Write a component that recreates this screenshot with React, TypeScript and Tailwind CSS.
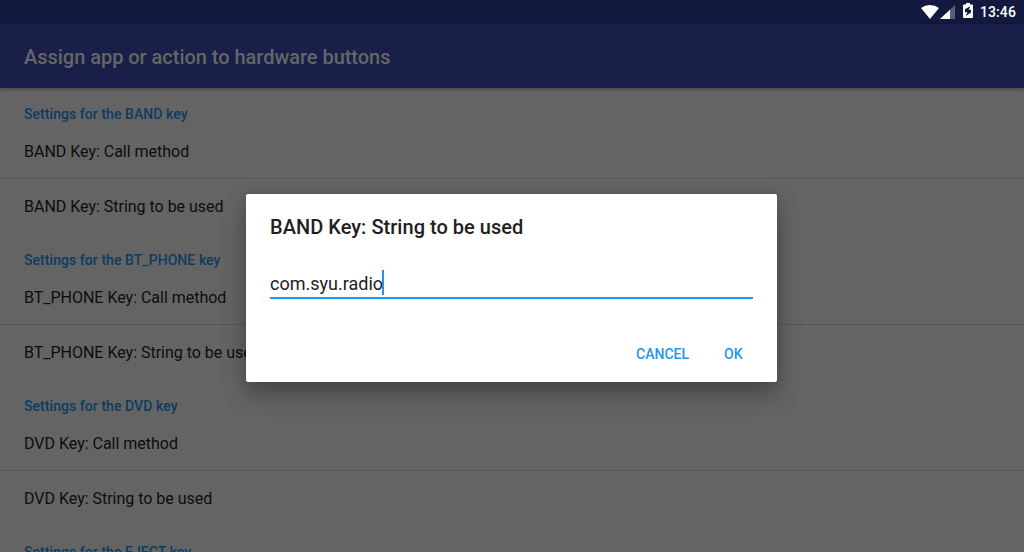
import React from "react";

const groups = ["BAND", "BT_PHONE", "DVD", "EJECT"];

function StatusBar() {
  return (
    <div className="flex h-6 shrink-0 items-center justify-end bg-[#141940] pr-2 text-white">
      <svg className="mr-px h-[14px] w-[18px]" viewBox="0 0 18 14" fill="currentColor">
        <path d="M9 14 0 2.9Q4 0 9 0t9 2.9Z" />
      </svg>
      <svg className="mr-2 h-[14px] w-[15px]" viewBox="0 0 15 14">
        <path d="M15 0v14H0Z" fill="#5b5e79" />
        <path d="M10 4.7V14H0Z" fill="#fff" />
      </svg>
      <svg className="mt-[-3px] mr-[7px] h-[15px] w-[10px]" viewBox="0 0 10 15">
        <path d="M3 0h4v1.5h2a1 1 0 0 1 1 1V14a1 1 0 0 1-1 1H1a1 1 0 0 1-1-1V2.5a1 1 0 0 1 1-1h2Z" fill="#fff" />
        <path d="M7.2 3.3 2 6.3v2.9h2.4L2.7 13 8 9.5V6.8H5.8Z" fill="#141940" />
      </svg>
      <span className="text-[14px] leading-6 font-medium tracking-[0.1px]">13:46</span>
    </div>
  );
}

function Group({ name }: { name: string }) {
  return (
    <section className="h-[146px] shrink-0 text-[16px] text-[#0d0d0d]">
      <h2 className="h-9 px-6 pt-4 text-[14px] leading-5 font-medium tracking-[0.06px] text-[#0d3c61]">Settings for the {name} key</h2>
      <div className="flex h-[55px] items-center border-b border-[#575757] px-6 pt-0.5 tracking-[-0.015px]">{name} Key: Call method</div>
      <div className="flex h-[55px] items-center px-6 tracking-[-0.015px]">{name} Key: String to be used</div>
    </section>
  );
}

export default function App() {
  return (
    <div className="relative flex h-[552px] w-[1024px] flex-col overflow-hidden bg-[#646464] font-[Roboto,sans-serif]">
      <StatusBar />
      <header className="z-0 flex h-16 shrink-0 items-center bg-[#191f48] px-6 pt-0.5 text-[20px] font-medium tracking-[-0.03px] text-[#666666] shadow-[0_1px_4px_rgba(0,0,0,0.35)]">
        Assign app or action to hardware buttons
      </header>
      <main className="flex flex-col">{groups.map((g) => <Group key={g} name={g} />)}</main>
      <div role="dialog" className="absolute top-[194px] left-[246px] flex h-[188px] w-[531px] flex-col rounded-[2px] bg-white px-6 shadow-[0_12px_24px_rgba(0,0,0,0.3),0_0_12px_rgba(0,0,0,0.1)]">
        <h1 className="mt-[18px] text-[20px] leading-[30px] font-medium tracking-[0.03px] text-[#212121]">BAND Key: String to be used</h1>
        <div className="mt-[28px] flex h-[29px] items-center border-b-2 border-[#2196f3] text-[18px] text-[#212121]">
          com.syu.radio<span className="mt-[-2px] ml-[-1px] h-[25px] w-0.5 bg-[#2196f3]" />
        </div>
        <div className="mt-[37px] flex justify-end gap-[35px] pr-[10.5px] text-[14px] leading-9 font-medium text-[#2196f3]">
          <button>CANCEL</button><button>OK</button>
        </div>
      </div>
    </div>
  );
}
